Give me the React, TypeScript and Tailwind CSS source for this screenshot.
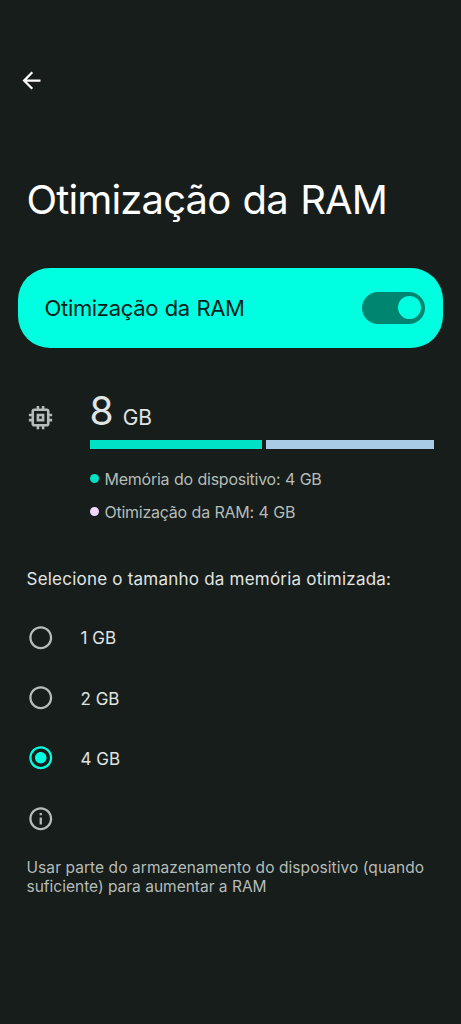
import {
  MdArrowBack,
  MdInfoOutline,
  MdMemory,
  MdRadioButtonChecked,
  MdRadioButtonUnchecked,
} from "react-icons/md";

const sizes = ["1 GB", "2 GB", "4 GB"];
const selected = "4 GB";

function Legend({ dot, text }: { dot: string; text: string }) {
  return (
    <li className="flex h-[33px] items-center gap-[6px]">
      <span className={`size-[9px] rounded-full ${dot}`} />
      <span className="text-[16px] leading-[24px] tracking-[-0.25px] [word-spacing:0.4px] text-[#b5bcb9]">{text}</span>
    </li>
  );
}

export default function App() {
  return (
    <main className="flex h-[1024px] w-full flex-col overflow-hidden bg-[#171d1b] font-['Inter','Liberation_Sans',sans-serif] whitespace-nowrap">
      <header className="pt-[67px] pl-[17.5px]">
        <button className="block text-white" aria-label="Voltar">
          <MdArrowBack className="size-[27px]" />
        </button>
      </header>

      <h1 className="mt-[82px] pl-[26.5px] text-[40px] leading-[48px] tracking-[-0.85px] [word-spacing:1.9px] text-white">
        Otimização da RAM
      </h1>

      <section className="mx-[18px] mt-[43.5px] flex h-[80.5px] items-center justify-between rounded-[32px] bg-[#00ffe0] pr-[18px] pl-[26.5px]">
        <span className="text-[22px] leading-[28px] tracking-[-0.32px] [word-spacing:0.7px] text-[#06211d]">Otimização da RAM</span>
        <span className="flex h-8 w-[63px] items-center justify-end rounded-full bg-[#008670] pr-[4px]">
          <span className="size-[23px] rounded-full bg-[#00ffe0]" />
        </span>
      </section>

      <section className="mt-[43px] flex pr-[27px] pl-[25px]">
        <MdMemory className="mt-[11px] size-[31px] shrink-0 text-[#b5bcb9]" />
        <div className="ml-[33.5px] flex-1">
          <p className="flex h-[40px] items-baseline gap-[9px] text-[#e0e4e2]">
            <span className="text-[39px] leading-[40px]">8</span>
            <span className="text-[21px] leading-[28px] tracking-[-0.1px]">GB</span>
          </p>
          <div className="mt-[9px] flex h-[9px] gap-[4px]">
            <span className="w-[172.5px] bg-[#00e2c6]" />
            <span className="flex-1 bg-[#aacbe6]" />
          </div>
          <ul className="mt-[13px]">
            <Legend dot="bg-[#00e2c6]" text="Memória do dispositivo: 4 GB" />
            <Legend dot="bg-[#f3d7fb]" text="Otimização da RAM: 4 GB" />
          </ul>
        </div>
      </section>

      <h2 className="mt-[38.5px] pl-[26.5px] text-[17px] leading-[24px] tracking-[0.22px] text-[#e0e4e2]">
        Selecione o tamanho da memória otimizada:
      </h2>

      <ul className="mt-[16.8px] pl-[26.5px]">
        {sizes.map((size) => (
          <li key={size} className="flex h-[60.3px] items-center">
            {size === selected ? (
              <MdRadioButtonChecked className="size-[27.5px] text-[#00ffe0]" />
            ) : (
              <MdRadioButtonUnchecked className="size-[27.5px] text-[#b5bcb9]" />
            )}
            <span className="ml-[26.5px] pt-[2px] text-[17px] leading-[24px] text-[#e0e4e2]">{size}</span>
          </li>
        ))}
      </ul>

      <footer className="mt-[17px] pl-[26.5px] text-[#b5bcb9]">
        <MdInfoOutline className="size-[27.5px]" />
        <p className="mt-[25px] text-[15.5px] leading-[19.5px] tracking-[0.07px]">
          Usar parte do armazenamento do dispositivo (quando
          <br />
          <span className="tracking-[0px]">suficiente) para aumentar a RAM</span>
        </p>
      </footer>
    </main>
  );
}
